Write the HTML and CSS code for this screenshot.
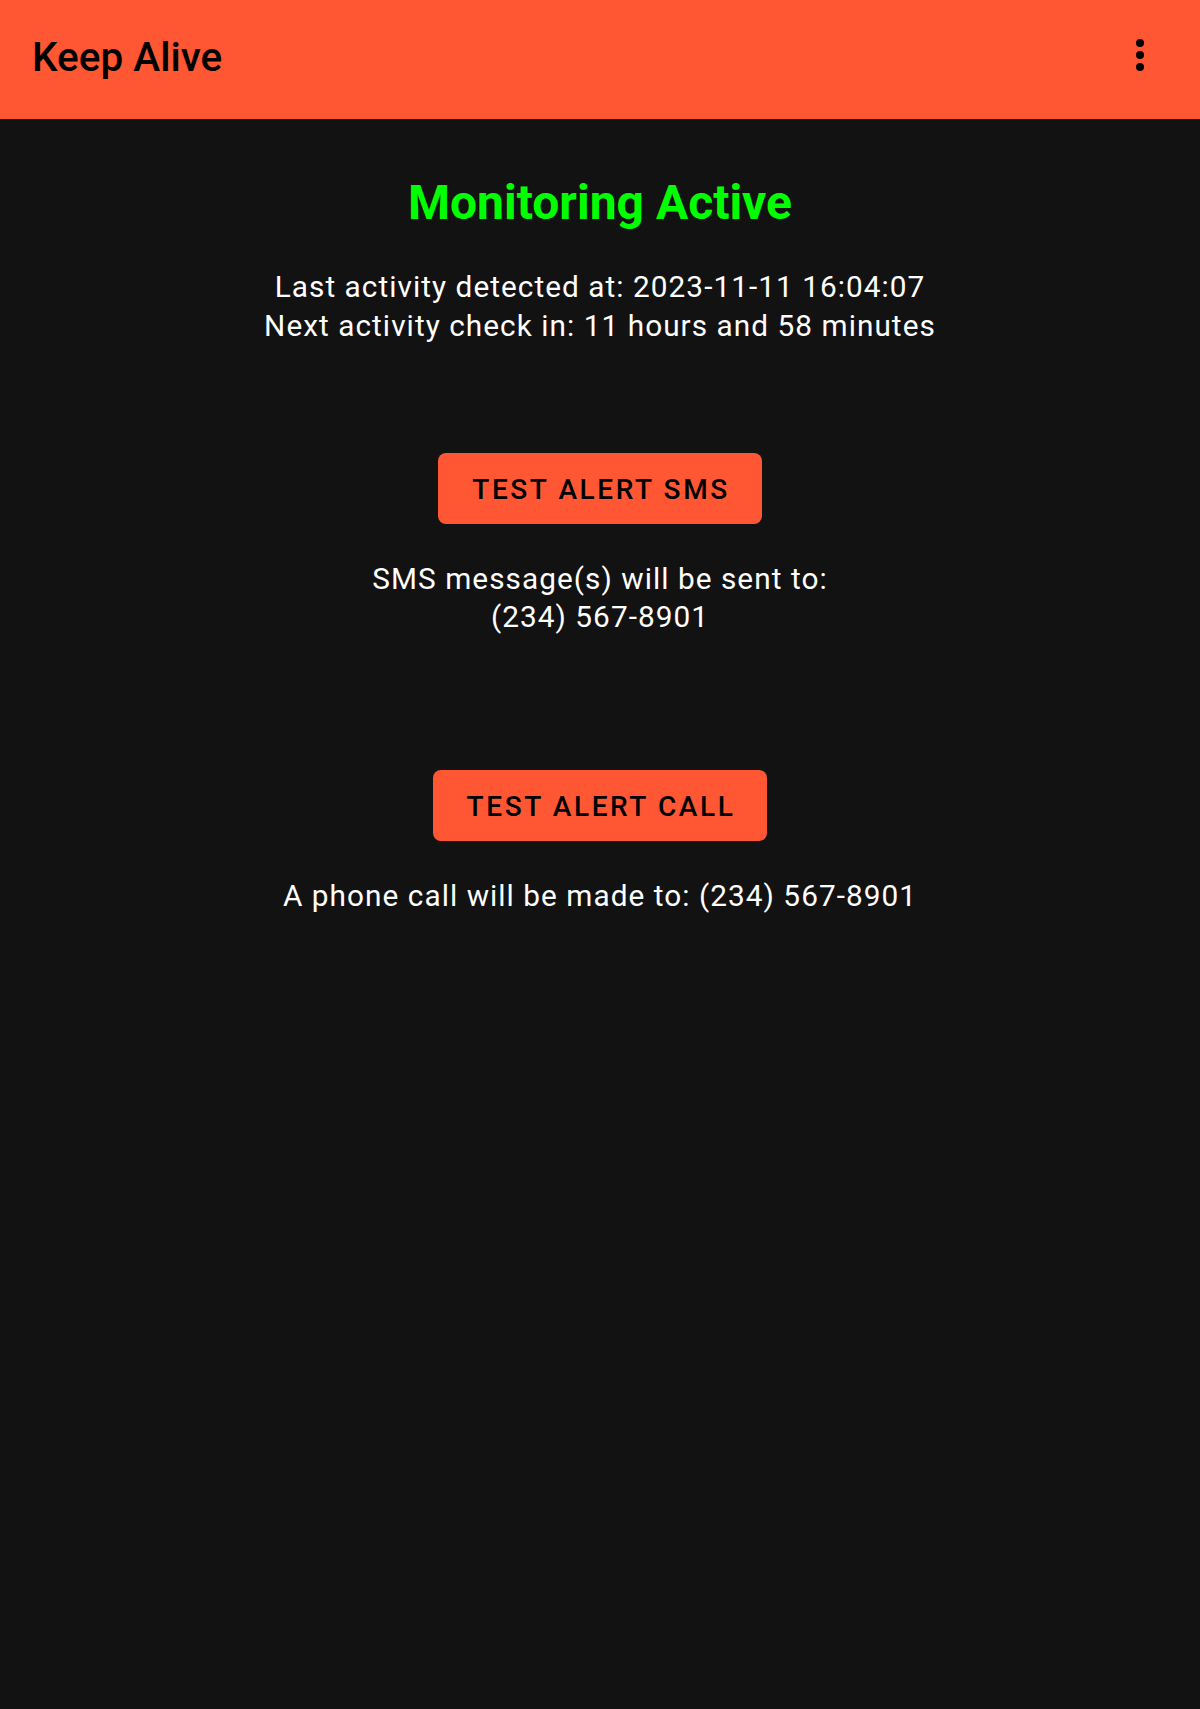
FILE: index.html
```html
<!DOCTYPE html>
<html lang="en">
<head>
<meta charset="utf-8">
<title>Keep Alive</title>
<link rel="stylesheet" href="styles.css">
</head>
<body>
<header class="appbar">
  <h1 class="appbar-title">Keep Alive</h1>
  <svg class="appbar-menu" width="48" height="48" viewBox="0 0 24 24" aria-label="More options">
    <circle cx="12" cy="6" r="2" fill="#000"/>
    <circle cx="12" cy="12" r="2" fill="#000"/>
    <circle cx="12" cy="18" r="2" fill="#000"/>
  </svg>
</header>
<main class="content">
  <h2 class="status">Monitoring Active</h2>
  <p class="info info-activity">Last activity detected at: 2023-11-11 16:04:07<br>Next activity check in: 11 hours and 58 minutes</p>
  <button class="btn btn-sms" type="button">TEST ALERT SMS</button>
  <p class="info info-after">SMS message(s) will be sent to:<br>(234) 567-8901</p>
  <button class="btn btn-call" type="button">TEST ALERT CALL</button>
  <p class="info info-after">A phone call will be made to: (234) 567-8901</p>
</main>
</body>
</html>
```

FILE: styles.css
```css
html, body {
  margin: 0;
  padding: 0;
}
body {
  background: #121212;
  font-family: Roboto, "Noto Sans", "Liberation Sans", sans-serif;
  color: #ffffff;
  min-height: 1709px;
}
.appbar {
  box-sizing: border-box;
  height: 119px;
  background: #ff5733;
  display: flex;
  align-items: flex-start;
  padding: 33px 36px 0 32px;
}
.appbar-title {
  margin: 0;
  font-size: 40.5px;
  line-height: 48px;
  font-weight: 500;
  color: #000;
}
.appbar-menu {
  margin-left: auto;
  margin-top: -2px;
  display: block;
}
.content {
  display: flex;
  flex-direction: column;
  align-items: center;
  padding-top: 55.5px;
}
.status {
  margin: 0;
  font-size: 48px;
  line-height: 56px;
  font-weight: 700;
  color: #00ff00;
}
.info {
  margin: 0;
  font-size: 29.75px;
  line-height: 38.5px;
  letter-spacing: 1.05px;
  text-align: center;
  color: #ffffff;
}
.info-activity {
  margin-top: 37.5px;
}
.info-after {
  margin-top: 36px;
}
.btn {
  box-sizing: border-box;
  height: 71px;
  border: none;
  border-radius: 8px;
  background: #ff5733;
  color: #000;
  font-family: Roboto, "Noto Sans", "Liberation Sans", sans-serif;
  font-size: 28px;
  font-weight: 500;
  letter-spacing: 2.6px;
  padding: 3px 32px 0 34px;
  display: flex;
  align-items: center;
  justify-content: center;
}
.btn-sms {
  margin-top: 107.5px;
}
.btn-call {
  margin-top: 133px;
}
```
